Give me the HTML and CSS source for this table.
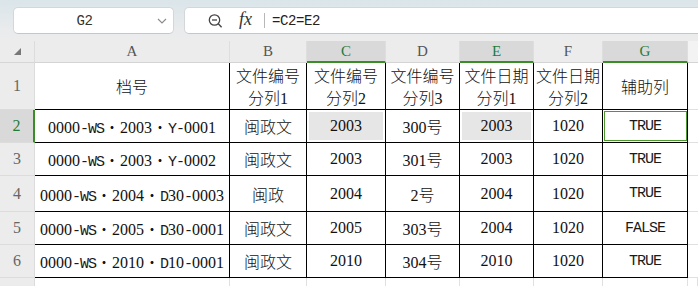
FILE: index.html
```html
<!DOCTYPE html>
<html lang="zh">
<head>
<meta charset="utf-8">
<link rel="stylesheet" href="styles.css">
</head>
<body>
<div class="toolbar">
  <div class="namebox">
    <span class="name">G2</span>
    <svg class="chev" width="14" height="8" viewBox="0 0 14 8"><polyline points="3,2 7,6 11,2" fill="none" stroke="#8a8a8a" stroke-width="1.1"/></svg>
  </div>
  <div class="fbox">
    <svg class="zoomicon" width="15" height="16" viewBox="0 0 15 16"><circle cx="6.5" cy="7" r="5.2" fill="none" stroke="#444" stroke-width="1.3"/><line x1="4" y1="7" x2="9" y2="7" stroke="#444" stroke-width="1.3"/><line x1="10.3" y1="10.8" x2="13.6" y2="14.3" stroke="#444" stroke-width="1.4"/></svg>
    <span class="fx">fx</span>
    <span class="sep"></span>
    <span class="formula">=C2=E2</span>
  </div>
</div>
<div class="sheet">
  <div class="corner"><svg width="8" height="8" viewBox="0 0 8 8"><polygon points="7,0 7,7 0,7" fill="#777"/></svg></div>
  <div class="ch">A</div>
  <div class="ch">B</div>
  <div class="ch sel">C</div>
  <div class="ch">D</div>
  <div class="ch sel">E</div>
  <div class="ch">F</div>
  <div class="ch sel">G</div>
  <div class="ch rest"></div>

  <div class="rh">1</div>
  <div class="cell"><span class="c">档号</span></div>
  <div class="cell"><span class="lines"><span class="c">文件编号</span><br><span class="c">分列</span>1</span></div>
  <div class="cell"><span class="lines"><span class="c">文件编号</span><br><span class="c">分列</span>2</span></div>
  <div class="cell"><span class="lines"><span class="c">文件编号</span><br><span class="c">分列</span>3</span></div>
  <div class="cell"><span class="lines"><span class="c">文件日期</span><br><span class="c">分列</span>1</span></div>
  <div class="cell"><span class="lines"><span class="c">文件日期</span><br><span class="c">分列</span>2</span></div>
  <div class="cell"><span class="c">辅助列</span></div>
  <div class="gl"></div>

  <div class="rh rsel">2</div>
  <div class="cell"><span class="t">0000<span class="m">-WS</span><span class="c">・</span>2003<span class="c">・</span><span class="m">Y-</span>0001</span></div>
  <div class="cell"><span class="c">闽政文</span></div>
  <div class="cell ref">2003</div>
  <div class="cell"><span class="t">300<span class="c">号</span></span></div>
  <div class="cell ref">2003</div>
  <div class="cell">1020</div>
  <div class="cell active"><span class="m">TRUE</span></div>
  <div class="gl"></div>

  <div class="rh">3</div>
  <div class="cell"><span class="t">0000<span class="m">-WS</span><span class="c">・</span>2003<span class="c">・</span><span class="m">Y-</span>0002</span></div>
  <div class="cell"><span class="c">闽政文</span></div>
  <div class="cell">2003</div>
  <div class="cell"><span class="t">301<span class="c">号</span></span></div>
  <div class="cell">2003</div>
  <div class="cell">1020</div>
  <div class="cell"><span class="m">TRUE</span></div>
  <div class="gl"></div>

  <div class="rh">4</div>
  <div class="cell"><span class="t">0000<span class="m">-WS</span><span class="c">・</span>2004<span class="c">・</span><span class="m">D</span>30<span class="m">-</span>0003</span></div>
  <div class="cell"><span class="c">闽政</span></div>
  <div class="cell">2004</div>
  <div class="cell"><span class="t">2<span class="c">号</span></span></div>
  <div class="cell">2004</div>
  <div class="cell">1020</div>
  <div class="cell"><span class="m">TRUE</span></div>
  <div class="gl"></div>

  <div class="rh">5</div>
  <div class="cell"><span class="t">0000<span class="m">-WS</span><span class="c">・</span>2005<span class="c">・</span><span class="m">D</span>30<span class="m">-</span>0001</span></div>
  <div class="cell"><span class="c">闽政文</span></div>
  <div class="cell">2005</div>
  <div class="cell"><span class="t">303<span class="c">号</span></span></div>
  <div class="cell">2004</div>
  <div class="cell">1020</div>
  <div class="cell"><span class="m">FALSE</span></div>
  <div class="gl"></div>

  <div class="rh">6</div>
  <div class="cell"><span class="t">0000<span class="m">-WS</span><span class="c">・</span>2010<span class="c">・</span><span class="m">D</span>10<span class="m">-</span>0001</span></div>
  <div class="cell"><span class="c">闽政文</span></div>
  <div class="cell">2010</div>
  <div class="cell"><span class="t">304<span class="c">号</span></span></div>
  <div class="cell">2010</div>
  <div class="cell">1020</div>
  <div class="cell"><span class="m">TRUE</span></div>
  <div class="gl"></div>

  <div class="rh last"></div>
  <div class="gv"></div>
  <div class="gv"></div>
  <div class="gv"></div>
  <div class="gv"></div>
  <div class="gv"></div>
  <div class="gv"></div>
  <div class="gv"></div>
  <div class="gv"></div>
</div>
</body>
</html>
```

FILE: styles.css
```css
html, body {
  margin: 0;
  padding: 0;
}
body {
  width: 698px;
  height: 286px;
  overflow: hidden;
  background: #fff;
  font-family: "Liberation Serif", "Noto Sans CJK SC", serif;
  color: #111;
}
.c {
  font-family: "Noto Sans CJK SC", sans-serif;
  font-size: 16px;
  letter-spacing: 0;
  font-weight: 300;
}
.m {
  font-family: "Liberation Mono", monospace;
  font-size: 15px;
  letter-spacing: -1px;
  color: #1a1a1a;
}
.toolbar {
  height: 41px;
  box-sizing: border-box;
  padding: 7px 0 0 13px;
  display: flex;
  align-items: flex-start;
  gap: 10px;
  background: linear-gradient(#dae5ea, #e9ebec 30px, #ececec);
  overflow: hidden;
}
.namebox {
  width: 161px;
  height: 27px;
  box-sizing: border-box;
  background: #fff;
  border: 1px solid #d4d6d8;
  border-bottom-color: #c4c6c8;
  border-radius: 5px;
  display: flex;
  align-items: center;
}
.name {
  flex: 1;
  text-align: center;
  font-family: "Liberation Mono", monospace;
  font-size: 14px;
  letter-spacing: -0.4px;
  color: #333;
}
.chev {
  margin-right: 4px;
}
.fbox {
  flex: 1;
  height: 27px;
  box-sizing: border-box;
  background: #fff;
  border: 1px solid #d4d6d8;
  border-bottom-color: #c4c6c8;
  border-radius: 5px;
  margin-right: -8px;
  display: flex;
  align-items: center;
  padding-left: 23px;
}
.zoomicon {
  margin-right: 16px;
}
.fx {
  font-family: "Liberation Serif", serif;
  font-style: italic;
  font-size: 18px;
  color: #333;
  margin-right: 12px;
  margin-top: -2px;
}
.sep {
  width: 1px;
  height: 15px;
  background: #b8b8b8;
  margin-right: 7px;
}
.formula {
  font-family: "Liberation Mono", monospace;
  font-size: 14px;
  letter-spacing: -0.4px;
  color: #222;
}
.sheet {
  display: grid;
  grid-template-columns: 35px 195px 77px 79px 74px 74px 69px 85px 1fr;
  grid-template-rows: 22px 47px 33px 33px 36px 33px 33px 1fr;
  height: 245px;
}
.sheet > div {
  box-sizing: border-box;
}
.corner {
  background: #ececec;
  border-right: 1px solid #dcdcdc;
  border-bottom: 1px solid #d6d6d6;
  display: flex;
  align-items: flex-end;
  padding: 0 0 6px 14px;
}
.ch {
  background: #ececec;
  border-right: 1px solid #dedede;
  border-bottom: 1px solid #d4d4d4;
  display: flex;
  align-items: center;
  justify-content: center;
  font-size: 15px;
  color: #555;
}
.ch.sel {
  background: #d9d9d9;
  color: #1f7a3e;
  border-bottom: 2px solid #3b8d27;
}
.ch.rest {
  background: #f3f3f3;
  border-right: 0;
}
.rh {
  background: #ececec;
  border-right: 1px solid #dcdcdc;
  border-bottom: 1px solid #dcdcdc;
  display: flex;
  align-items: center;
  justify-content: center;
  font-size: 16px;
  color: #666;
}
.rh.rsel {
  background: #d9d9d9;
  color: #1f7a3e;
  border-right: 2px solid #3b8d27;
}
.rh.last {
  border-bottom: 0;
}
.cell {
  border-right: 1px solid #000;
  border-bottom: 1px solid #000;
  display: flex;
  align-items: center;
  justify-content: center;
  text-align: center;
  font-size: 16px;
  color: #111;
  white-space: nowrap;
  position: relative;
}
.lines {
  display: block;
  line-height: 21px;
  padding-top: 1px;
}
.t {
  display: block;
}
.cell.ref {
  background: #e6e6e6;
  box-shadow: inset 0 0 0 2px #fff;
}
.cell.active::after {
  content: "";
  position: absolute;
  left: 1px;
  top: 1px;
  right: 0;
  bottom: 1px;
  border: 1.5px solid #4a9a2c;
}
.gl {
  border-bottom: 1px solid #e0e0e0;
}
.gv {
  border-right: 1px solid #e0e0e0;
}
```
